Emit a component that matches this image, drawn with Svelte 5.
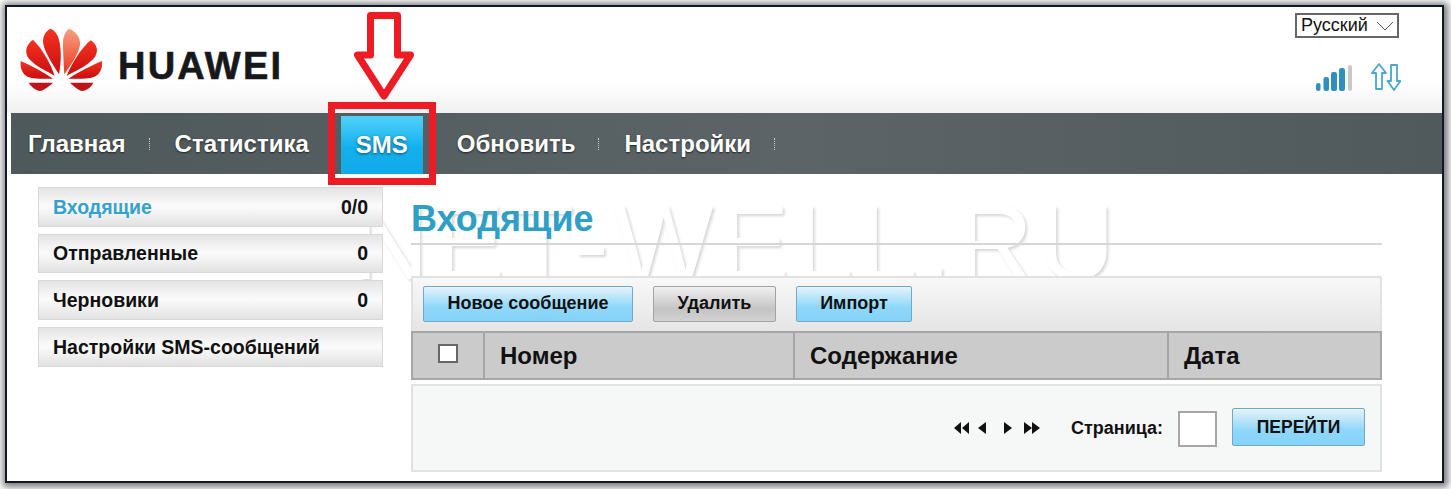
<script>
	const tabs = ['Главная', 'Статистика', 'SMS', 'Обновить', 'Настройки'];
	const folders = [
		{ name: 'Входящие', count: '0/0', active: true },
		{ name: 'Отправленные', count: '0' },
		{ name: 'Черновики', count: '0' },
		{ name: 'Настройки SMS-сообщений', count: '' }
	];
	const bars = [
		{ x: 0, w: 4.5, h: 8 },
		{ x: 7.5, w: 5.5, h: 14 },
		{ x: 15, w: 6, h: 19 },
		{ x: 23, w: 6, h: 23 }
	];
</script>

<div class="frame">
	<header class="top">
		<div class="brand">
			<svg class="petals" viewBox="55 20 255 195" aria-hidden="true">
				<defs>
					<linearGradient id="red" x1="0" y1="0" x2="0" y2="1">
						<stop offset="0" stop-color="#f5331f" />
						<stop offset="1" stop-color="#c90d10" />
					</linearGradient>
					<linearGradient id="pale" x1="0" y1="0" x2="0" y2="1">
						<stop offset="0" stop-color="#f8a183" />
						<stop offset="1" stop-color="#e8381c" />
					</linearGradient>
				</defs>
				<path fill="url(#red)" d="M150 25C134 32 124 50 128 72C134 100 160 138 175 162C182 125 182 90 176 62C172 42 162 30 150 25Z" />
				<path fill="url(#pale)" d="M205 25C190 36 186 55 187 80C188 110 189 135 191 162C210 135 232 105 238 75C241 52 225 32 205 25Z" />
				<path fill="url(#red)" d="M97 58C78 72 72 90 80 108C92 130 130 150 162 166C150 130 125 85 97 58Z" />
				<path fill="url(#red)" d="M270 60C245 80 215 125 198 166C232 150 270 130 284 108C294 88 288 72 270 60Z" />
				<path fill="url(#red)" d="M60 122C58 145 66 162 82 170C104 177 132 175 157 175C128 155 92 136 60 122Z" />
				<path fill="url(#red)" d="M304 122C272 136 232 155 203 175C230 176 260 176 280 170C298 162 306 145 304 122Z" />
				<path fill="#c0141a" d="M84 187L157 187C145 198 130 210 118 212C104 210 92 200 84 187Z" />
				<path fill="#c0141a" d="M278 187L208 187C220 198 232 210 245 212C260 210 272 200 278 187Z" />
			</svg>
			<span class="wordmark">HUAWEI</span>
		</div>
		<div class="status">
			<div class="lang">
				<span>Русский</span>
				<svg width="18" height="10" viewBox="0 0 18 10" aria-hidden="true"><path d="M1 1L9 9L17 1" fill="none" stroke="#555" stroke-width="1" /></svg>
			</div>
			<div class="icons">
				<svg width="37" height="27" viewBox="0 0 37 27" aria-hidden="true">
					{#each bars as b}
						<rect x={b.x} y={27 - b.h} width={b.w} height={b.h} rx="2.2" fill="#2f8fbd" />
					{/each}
					<rect x="32" y="1" width="4" height="26" rx="2" fill="#c9c9c9" />
				</svg>
				<svg width="30" height="28" viewBox="0 0 30 28" aria-hidden="true">
					<path d="M8 1L15 10H11V26H5V10H1Z" fill="#fff" stroke="#4ba6d0" stroke-width="1.8" stroke-linejoin="round" />
					<path d="M23 27L29.5 18H26V2H20V18H16.5Z" fill="#fff" stroke="#4ba6d0" stroke-width="1.8" stroke-linejoin="round" />
				</svg>
			</div>
		</div>
	</header>

	<nav class="nav">
		{#each tabs as tab}
			<a href="#{tab}" class="tab" class:current={tab === 'SMS'}>{tab}</a>
		{/each}
	</nav>

	<div class="watermark">NET-WELL.RU</div>

	<div class="body">
		<aside class="side">
			{#each folders as f}
				<div class="folder" class:active={f.active}>
					<span>{f.name}</span>
					<b>{f.count}</b>
				</div>
			{/each}
		</aside>

		<main class="main">
			<h1>Входящие</h1>
			<div class="toolbar">
				<button class="btn blue wide">Новое сообщение</button>
				<button class="btn grey">Удалить</button>
				<button class="btn blue">Импорт</button>
			</div>
			<div class="thead">
				<div class="cell check"><span class="box"></span></div>
				<div class="cell num">Номер</div>
				<div class="cell msg">Содержание</div>
				<div class="cell date">Дата</div>
			</div>
			<div class="pager">
				<svg width="88" height="14" viewBox="0 0 88 14" aria-hidden="true" fill="#111">
					<path d="M8 1V13L1 7ZM16 1V13L9 7Z" />
					<path d="M33 1V13L25 7Z" />
					<path d="M51 1V13L59 7Z" />
					<path d="M71 1V13L79 7ZM79 1V13L87 7Z" />
				</svg>
				<span class="page-label">Страница:</span>
				<input class="page-input" type="text" aria-label="Страница" />
				<button class="btn blue go">ПЕРЕЙТИ</button>
			</div>
		</main>
	</div>

	<svg class="arrow" width="60" height="90" viewBox="0 0 60 90" aria-hidden="true">
		<path d="M16.5 3.5H43.5V43H56.5L30 84L3.5 43H16.5Z" fill="#fff" stroke="#ed1c24" stroke-width="7" stroke-linejoin="round" />
	</svg>
	<div class="callout"></div>
</div>

<style>
	:global(html), :global(body) {
		height: 489px;
	}

	:global(body) {
		margin: 0;
		background: #fff;
		overflow: hidden;
		font-family: "Liberation Sans", Arial, sans-serif;
	}

	.frame {
		position: relative;
		box-sizing: border-box;
		width: 1439px;
		height: 478px;
		margin: 5px 0 0 5px;
		padding-left: 4px;
		background: #fff;
		border: 2px solid #12172b;
		box-shadow: 1px 1px 7px 3px #777;
	}

	.top {
		display: flex;
		justify-content: space-between;
		height: 106px;
		background: linear-gradient(#fff 70%, #f1f1f1);
		margin-left: -4px;
		padding-left: 4px;
	}

	.brand {
		display: flex;
		align-items: center;
		gap: 14px;
		height: 86px;
		padding: 18px 0 0 8px;
		box-sizing: border-box;
	}

	.petals {
		width: 85px;
		height: 65px;
	}

	.wordmark {
		margin-top: 15px;
		font-size: 38px;
		font-weight: 700;
		letter-spacing: 2.2px;
		color: #16181a;
		-webkit-text-stroke: 0.6px #16181a;
	}

	.status {
		display: flex;
		flex-direction: column;
		align-items: flex-end;
		width: 147px;
		padding-top: 6px;
		padding-right: 43px;
		box-sizing: border-box;
	}

	.lang {
		display: flex;
		align-items: center;
		justify-content: space-between;
		box-sizing: border-box;
		width: 104px;
		height: 25px;
		padding: 0 3px 0 4px;
		border: 2px solid #666;
		font-size: 18px;
		color: #111;
	}

	.icons {
		display: flex;
		align-items: center;
		gap: 18px;
		margin-top: 25px;
		margin-right: -2px;
	}

	.nav {
		display: flex;
		align-items: center;
		height: 61px;
		background: linear-gradient(90deg, #4e595c, #5c6467 55%, #50595c);
	}

	.tab {
		position: relative;
		display: flex;
		align-items: center;
		height: 100%;
		color: #fff;
		font-size: 24px;
		font-weight: 700;
		text-decoration: none;
		text-shadow: 0 1px 2px #222;
		padding: 0 24px 0 25px;
	}

	.tab:first-child {
		padding-left: 17px;
	}

	.tab:nth-child(1)::after,
	.tab:nth-child(4)::after,
	.tab:nth-child(5)::after {
		content: '';
		position: absolute;
		right: 0;
		top: 25px;
		height: 12px;
		border-right: 1px dotted #c8cccd;
	}

	.tab.current {
		box-sizing: border-box;
		width: 82px;
		height: 58px;
		margin: 2px 9px 0 8px;
		padding: 0;
		justify-content: center;
		background: linear-gradient(#52d1fb, #14b0ec 55%, #10aae8);
		text-shadow: 0 1px 3px #11506b;
	}

	.body {
		position: relative;
		z-index: 1;
		display: flex;
		align-items: flex-start;
		gap: 28px;
		padding: 13px 0 0 27px;
	}

	.side {
		display: flex;
		flex-direction: column;
		gap: 7px;
		width: 345px;
	}

	.folder {
		display: flex;
		align-items: center;
		justify-content: space-between;
		box-sizing: border-box;
		height: 40px;
		padding: 0 14px;
		border: 1px solid #d8d8d8;
		background: linear-gradient(#e4e4e4, #fbfbfb 48%, #e2e2e2);
		font-size: 19.5px;
		font-weight: 700;
		color: #111;
	}

	.folder:nth-child(2) {
		height: 39px;
	}

	.folder.active span {
		color: #34a2c9;
	}

	.main {
		width: 971px;
	}

	h1 {
		margin: 0;
		height: 58px;
		padding-top: 13px;
		box-sizing: border-box;
		border-bottom: 2px solid #d6d6d6;
		font-size: 36px;
		line-height: 38px;
		font-weight: 700;
		color: #2f9fc6;
	}

	.toolbar {
		display: flex;
		align-items: center;
		gap: 20px;
		box-sizing: border-box;
		height: 55px;
		margin-top: 31px;
		padding: 0 0 2px 10px;
		border: 2px solid #e2e2e2;
		border-bottom: none;
		background: linear-gradient(#f8f8f8, #e5e5e5);
	}

	.btn {
		box-sizing: border-box;
		height: 36px;
		padding: 0;
		border-radius: 2px;
		font-family: inherit;
		font-size: 18px;
		font-weight: 700;
		color: #111;
	}

	.blue {
		width: 116px;
		border: 1px solid #6ea9c6;
		background: linear-gradient(#e6f3fa, #8ed7fa 60%, #85d3f9);
	}

	.blue.wide {
		width: 210px;
	}

	.grey {
		width: 123px;
		border: 1px solid #a3a3a3;
		background: linear-gradient(#f0f0f0, #c4c4c4 65%, #d2d2d2);
	}

	.thead {
		display: flex;
		box-sizing: border-box;
		height: 49px;
		border: 2px solid #a6a6a6;
		background: #cbcbcb;
		font-size: 24px;
		font-weight: 700;
		color: #111;
	}

	.cell {
		display: flex;
		align-items: center;
		box-sizing: border-box;
		border-right: 2px solid #a6a6a6;
		padding-left: 15px;
	}

	.check {
		width: 72px;
		justify-content: center;
		padding: 0 0 4px;
	}

	.box {
		box-sizing: border-box;
		width: 20px;
		height: 19px;
		background: #fff;
		border: 2px solid #666;
	}

	.num {
		width: 310px;
	}

	.msg {
		width: 374px;
	}

	.date {
		flex: 1;
		border-right: none;
	}

	.pager {
		display: flex;
		align-items: center;
		box-sizing: border-box;
		height: 88px;
		margin-top: 4px;
		padding-right: 15px;
		justify-content: flex-end;
		border: 2px solid #e2e2e2;
		background: #f6f7f7;
	}

	.page-label {
		margin-left: 30px;
		font-size: 18px;
		font-weight: 700;
		color: #111;
	}

	.page-input {
		box-sizing: border-box;
		width: 39px;
		height: 36px;
		margin: 2px 15px 0;
		padding: 0;
		border: 2px solid #a6a6a6;
		border-radius: 0;
		background: #fff;
	}

	.btn.go {
		width: 133px;
		height: 38px;
		margin-bottom: 2px;
		font-size: 17.5px;
	}

	/* overlays: watermark and red callouts painted on the photo */
	.watermark {
		position: absolute;
		left: 345px;
		top: 175px;
		font-size: 106px;
		line-height: 120px;
		letter-spacing: 5px;
		white-space: nowrap;
		color: #fff;
		text-shadow: 2px 2px 3px rgba(0, 0, 0, 0.16);
	}

	.arrow {
		position: absolute;
		left: 347px;
		top: 5px;
	}

	.callout {
		position: absolute;
		z-index: 2;
		left: 321px;
		top: 95px;
		box-sizing: border-box;
		width: 108px;
		height: 83px;
		border: 7px solid #ed1c24;
		pointer-events: none;
	}
</style>
